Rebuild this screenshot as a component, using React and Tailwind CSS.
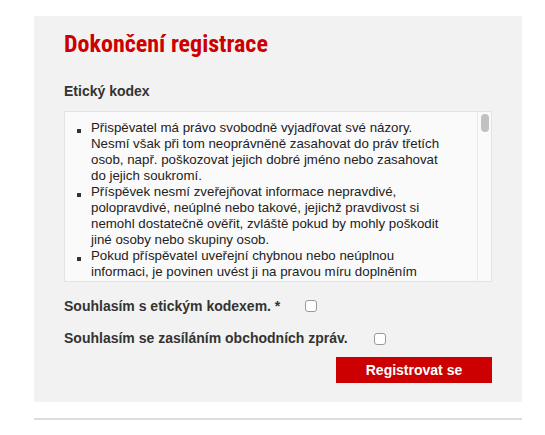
export default function App() {
  const items = [
    [
      "Přispěvatel má právo svobodně vyjadřovat své názory.",
      "Nesmí však při tom neoprávněně zasahovat do práv třetích",
      "osob, např. poškozovat jejich dobré jméno nebo zasahovat",
      "do jejich soukromí.",
    ],
    [
      "Příspěvek nesmí zveřejňovat informace nepravdivé,",
      "polopravdivé, neúplné nebo takové, jejichž pravdivost si",
      "nemohl dostatečně ověřit, zvláště pokud by mohly poškodit",
      "jiné osoby nebo skupiny osob.",
    ],
    [
      "Pokud příspěvatel uveřejní chybnou nebo neúplnou",
      "informaci, je povinen uvést ji na pravou míru doplněním",
    ],
  ];
  return (
    <div className="bg-white w-[545px] h-[435px] pt-[16px] font-['Liberation_Sans',Arial,sans-serif]">
      <div className="ml-[34px] w-[488px] bg-[#f2f2f2] px-[30px] pt-[13px] pb-[19px]">
        <h1 className="text-[24px] leading-[30px] font-bold text-[#cc0000] font-['Roboto_Condensed','Liberation_Sans_Narrow','DejaVu_Sans_Condensed',sans-serif]">
          Dokončení registrace
        </h1>
        <h2 className="mt-[24px] text-[14px] leading-[16px] font-bold text-[#333333]">
          Etický kodex
        </h2>
        <div className="mt-[12px] h-[171px] flex border border-[#e3e3e3] bg-[#fafafa]">
          <div className="flex-1 overflow-hidden pt-[8px] pl-[12px]">
            <ul className="flex flex-col text-[13.3px] leading-[16px] text-[#222222]">
              {items.map((lines, i) => (
                <li key={i} className="flex">
                  <span className="w-[4px] h-[4px] bg-[#333333] mt-[9px] mr-[10px] shrink-0" />
                  <span className="whitespace-nowrap">
                    {lines.map((l, j) => (
                      <span key={j} className="block">
                        {l}
                      </span>
                    ))}
                  </span>
                </li>
              ))}
            </ul>
          </div>
          <div className="w-[14px] border-l border-[#ebebeb] pt-[2px] flex justify-center">
            <div className="w-[8px] h-[18px] rounded-full bg-[#c1c1c1]" />
          </div>
        </div>
        <div className="mt-[16px] h-[16px] flex items-center">
          <span className="text-[14px] leading-[16px] font-bold text-[#333333]">
            Souhlasím s etickým kodexem. *
          </span>
          <input
            type="checkbox"
            className="ml-[25px] appearance-none w-[12px] h-[12px] border border-[#9a9a9a] rounded-[3px] bg-white"
          />
        </div>
        <div className="mt-[16px] h-[16px] flex items-center">
          <span className="text-[14px] leading-[16px] font-bold text-[#333333]">
            Souhlasím se zasíláním obchodních zpráv.
          </span>
          <input
            type="checkbox"
            className="ml-[26px] mt-[2px] appearance-none w-[12px] h-[12px] border border-[#9a9a9a] rounded-[3px] bg-white"
          />
        </div>
        <div className="mt-[11px] flex justify-end">
          <button className="w-[156px] h-[26px] bg-[#cc0000] text-white text-[14px] font-bold leading-[16px]">
            Registrovat se
          </button>
        </div>
      </div>
      <div className="mt-[16px] ml-[34px] w-[488px] h-[2px] bg-[#dddddd]" />
    </div>
  );
}
